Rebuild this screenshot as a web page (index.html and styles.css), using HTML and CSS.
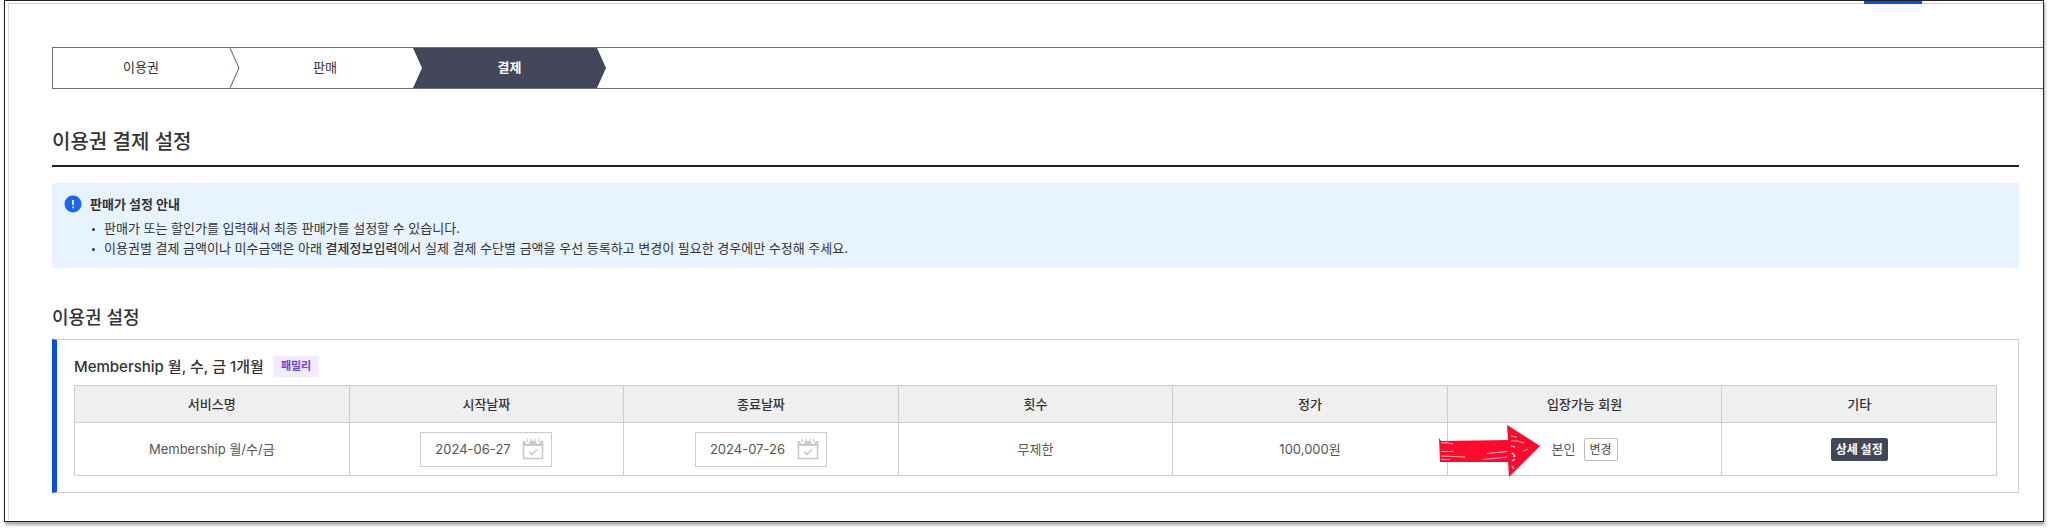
FILE: index.html
```
<!DOCTYPE html>
<html lang="ko">
<head>
    <meta charset="UTF-8">
    <meta name="viewport" content="width=device-width, initial-scale=1.0">
    <title>이용권 결제 설정</title>
    <link rel="stylesheet" href="styles.css">
</head>
<body>
    <div class="window">
        <span class="tab-bar"></span>
        <div class="page">
            <ol class="steps">
                <li class="step">이용권
                    <svg class="step-line" width="12" height="40" viewBox="0 0 12 40"><path d="M1 0 L10 20 L1 40" fill="none" stroke="#555a66"/></svg>
                </li>
                <li class="step">판매</li>
                <li class="step on">결제</li>
            </ol>

            <main class="content">
                <h1>이용권 결제 설정</h1>

                <section class="notice">
                    <svg class="notice-icon" width="18" height="18" viewBox="0 0 18 18">
                        <circle cx="9" cy="9" r="8.5" fill="#1b64f5"/>
                        <path d="M9 5v5M9 11.5v1.7" stroke="#fff" stroke-width="1.7"/>
                    </svg>
                    <div>
                        <h2>판매가 설정 안내</h2>
                        <ul>
                            <li>판매가 또는 할인가를 입력해서 최종 판매가를 설정할 수 있습니다.</li>
                            <li>이용권별 결제 금액이나 미수금액은 아래 <b>결제정보입력</b>에서 실제 결제 수단별 금액을 우선 등록하고 변경이 필요한 경우에만 수정해 주세요.</li>
                        </ul>
                    </div>
                </section>

                <h3>이용권 설정</h3>
                <section class="card">
                    <div class="card-title">
                        <h4>Membership 월, 수, 금 1개월</h4>
                        <span class="badge">패밀리</span>
                    </div>
                    <table>
                        <thead>
                            <tr>
                                <th>서비스명</th>
                                <th>시작날짜</th>
                                <th>종료날짜</th>
                                <th>횟수</th>
                                <th>정가</th>
                                <th>입장가능 회원</th>
                                <th>기타</th>
                            </tr>
                        </thead>
                        <tbody>
                            <tr>
                                <td>Membership 월/수/금</td>
                                <td>
                                    <label class="date">
                                        <input type="text" value="2024-06-27" aria-label="시작날짜">
                                        <svg width="22" height="22" viewBox="0 0 22 22"><use href="#calendar"/></svg>
                                    </label>
                                </td>
                                <td>
                                    <label class="date">
                                        <input type="text" value="2024-07-26" aria-label="종료날짜">
                                        <svg width="22" height="22" viewBox="0 0 22 22"><use href="#calendar"/></svg>
                                    </label>
                                </td>
                                <td>무제한</td>
                                <td>100,000원</td>
                                <td class="member">
                                    <svg class="arrow" width="102" height="54" viewBox="0 0 102 54">
                                        <path d="M0 14 L2 17 L69 16 L68 1 L101 22 L70 53 L69 38 L1 38 Z" fill="#ff0a2f"/>
                                        <path d="M2 19 Q8 18 14 20M2 27.500h12M2 32l24 1M2 35.500h9M44 35.500L68 33M48 29.500l20-2M72 12l6 1M72 17q6-1 13 2M84 27l5-2" stroke="#ffe3e6" stroke-width=".8" fill="none"/>
                                        <path d="M73 29l3 3-2 1M73 37l3-2M73 42l2 3M72 22l4 1" stroke="#fff" stroke-width="1.200" fill="none"/>
                                    </svg>
                                    <div class="member-box">본인 <button type="button" class="btn">변경</button></div>
                                </td>
                                <td><button type="button" class="btn btn-dark">상세 설정</button></td>
                            </tr>
                        </tbody>
                    </table>
                </section>
            </main>
        </div>
    </div>

    <svg class="defs" width="0" height="0">
        <symbol id="calendar" viewBox="0 0 22 22">
            <path d="M1.500 6v14.500h19V6" fill="none" stroke="#c9cbd0" stroke-width="1.600"/>
            <path d="M.7 3H3q.3 3 2.500 3T8 3h5.500q.3 3 2.500 3t2.500-3h2.800v5H.7z" fill="#c9cbd0"/>
            <path d="M5.300 .5v3.500M9 .8v2.500M13 .8v2.500M16.500 .5v3.500" stroke="#c9cbd0" stroke-width="1.200"/>
            <path d="M7 13.500l3 3 5-5" fill="none" stroke="#c9cbd0" stroke-width="1.600"/>
        </symbol>
    </svg>
</body>
</html>
```
FILE: styles.css
```
*{
    box-sizing: border-box;
    margin: 0;
    padding: 0;
}
body{
    padding: 0 4px 9px;
    background: #fff;
    color: #333;
    font-family: Inter, "Noto Sans CJK KR", sans-serif;
    font-size: 13px;
    line-height: 20px;
}
h1, h2, h3, h4{
    font-weight: 500;
}
ul, ol{
    list-style: none;
}
.window{
    position: relative;
    border: 1px solid #222;
    box-shadow: 1px 3px 3px rgba(0, 0, 0, 0.35);
    padding: 2px 0 0 3px;
}
.tab-bar{
    position: absolute;
    top: 0;
    right: 121px;
    width: 58px;
    height: 3px;
    background: #0b4fe0;
}
.page{
    border-top: 1px solid #cfccd2;
    border-left: 1px solid #d8d6da;
    padding: 43px 0 28px 43px;
}

/* 단계 표시 */
.steps{
    display: flex;
    height: 42px;
    border: 1px solid #6c6e76;
    border-right: 0;
}
.step{
    position: relative;
    width: 184px;
    padding-right: 8px;
    line-height: 38px;
    text-align: center;
}
.step-line{
    position: absolute;
    top: 0;
    right: -4px;
}
.step.on{
    width: 193px;
    padding: 0;
    margin-left: -8px;
    background: #434759;
    color: #fff;
    font-weight: bold;
    clip-path: polygon(0 0, 184px 0, 100% 50%, 184px 100%, 0 100%, 9px 50%);
}

.content{
    padding-right: 24px;
}
h1{
    padding: 39px 0 8px;
    border-bottom: 2px solid #222;
    font-size: 20px;
    line-height: 29px;
}
.notice{
    display: flex;
    gap: 8px;
    margin-top: 16px;
    padding: 10px 12px;
    background: #e7f3fe;
}
.notice-icon{
    margin-top: 2px;
}
.notice h2{
    font-size: 13px;
    font-weight: bold;
    line-height: 22px;
}
.notice ul{
    margin-top: 3px;
}
.notice li{
    position: relative;
    padding-left: 14px;
}
.notice li::before{
    content: "";
    position: absolute;
    top: 10px;
    left: 2px;
    width: 3px;
    height: 3px;
    border-radius: 50%;
    background: #333;
}
.notice b{
    font-weight: 500;
}
h3{
    margin: 37px 0 8px;
    font-size: 18px;
    line-height: 26px;
}

/* 이용권 카드 */
.card{
    border: 1px solid #ccc;
    border-left: 5px solid #0b4fe0;
    padding: 16px 21px 16px 17px;
}
.card-title{
    display: flex;
    align-items: center;
    gap: 9px;
    margin-bottom: 8px;
}
h4{
    font-size: 15px;
    line-height: 21px;
}
.badge{
    padding: 0 8px;
    border-radius: 2px;
    background: #f1ebfd;
    color: #7440d8;
    font-size: 11px;
    font-weight: bold;
    line-height: 21px;
}
table{
    width: 100%;
    table-layout: fixed;
    border-collapse: collapse;
    text-align: center;
}
th, td{
    border: 1px solid #ccc;
}
th{
    height: 37px;
    background: #efefef;
    font-weight: 500;
}
td{
    height: 53px;
    color: #555;
}
.date{
    display: inline-flex;
    align-items: center;
    width: 132px;
    height: 35px;
    padding: 0 7px 0 14px;
    border: 1px solid #ccc;
    vertical-align: middle;
}
.date input{
    flex: 1;
    min-width: 0;
    border: 0;
    outline: 0;
    background: none;
    color: #555;
    font: inherit;
}
.btn{
    height: 23px;
    padding: 0 5px;
    border: 1px solid #bbb;
    border-radius: 2px;
    background: #fff;
    color: #444;
    font: inherit;
    font-size: 12px;
    line-height: 21px;
}
.btn-dark{
    padding: 0 4px;
    border-color: #434759;
    background: #434759;
    color: #fff;
    font-weight: bold;
}
.member{
    position: relative;
}
.member-box{
    display: flex;
    align-items: center;
    justify-content: center;
    gap: 8px;
}
.arrow{
    position: absolute;
    top: 1px;
    left: -9px;
}
.defs{
    position: absolute;
}
```
